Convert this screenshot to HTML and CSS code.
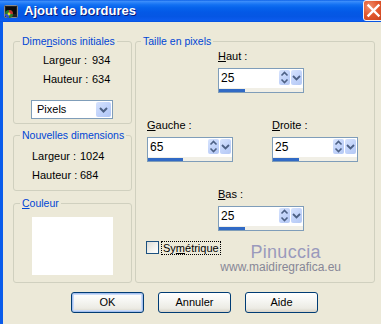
FILE: index.html
```html
<!DOCTYPE html>
<html lang="fr">
<head>
<meta charset="utf-8">
<title>Ajout de bordures</title>
<link rel="stylesheet" href="styles.css">
</head>
<body>
<div class="window">
  <div class="titlebar">
    <svg class="app-icon" viewBox="0 0 16 16" width="16" height="16">
      <rect x="1.5" y="1.5" width="13" height="12" rx="1" fill="#202020" stroke="#8a8a8a"/>
      <rect x="3" y="3" width="10" height="7" fill="#0a0a0a"/>
      <circle cx="6" cy="10" r="4" fill="#2a7a2a"/>
      <path d="M6 6a4 4 0 0 1 4 4H6z" fill="#c03030"/>
      <path d="M2 10a4 4 0 0 0 4 4v-4z" fill="#3050d0"/>
      <circle cx="6" cy="10" r="1.4" fill="#e0e040"/>
    </svg>
    <span class="title">Ajout de bordures</span>
    <div class="close">
      <svg viewBox="0 0 21 21" width="21" height="21">
        <path d="M5.5 5.5L15.5 15.5M15.5 5.5L5.5 15.5" stroke="#fff" stroke-width="2.4" stroke-linecap="square"/>
      </svg>
    </div>
  </div>
  <div class="client">
    <div class="main">
      <div class="leftcol">
        <div class="group g-init">
          <div class="legend">Dime<u>n</u>sions initiales</div>
          <div class="info info-init">
            <span>Largeur :</span><span>934</span>
            <span>Hauteur :</span><span>634</span>
          </div>
          <div class="select">
            <span class="select-text">Pixels</span>
            <span class="dd-btn">
              <svg viewBox="0 0 15 15" width="15" height="15"><path d="M4 6l3.5 3.5L11 6" fill="none" stroke="#4d6185" stroke-width="2"/></svg>
            </span>
          </div>
        </div>
        <div class="group g-new">
          <div class="legend">Nouvelles dimensions</div>
          <div class="info info-new">
            <span>Largeur :</span><span>1024</span>
            <span>Hauteur :</span><span>684</span>
          </div>
        </div>
        <div class="group g-color">
          <div class="legend"><u>C</u>ouleur</div>
          <div class="color-box"></div>
        </div>
      </div>
      <div class="group g-size">
        <div class="legend">Taille en pixels</div>
        <div class="field-row row-center">
          <div class="field">
            <div class="flabel"><u>H</u>aut :</div>
            <div class="spin">
              <div class="spin-top">
                <span class="spin-val">25</span>
                <span class="sbtn updown">
                  <svg viewBox="0 0 11 15" width="11" height="15"><path d="M2.5 5.5L5.5 2.5L8.5 5.5M2.5 9.5L5.5 12.5L8.5 9.5" fill="none" stroke="#4d6185" stroke-width="1.6"/></svg>
                </span>
                <span class="sbtn">
                  <svg viewBox="0 0 11 15" width="11" height="15"><path d="M2 6l3.5 3.5L9 6" fill="none" stroke="#4d6185" stroke-width="1.8"/></svg>
                </span>
              </div>
              <div class="spin-bar"><div class="bar" style="width:26px"></div></div>
            </div>
          </div>
        </div>
        <div class="field-row row-sides">
          <div class="field">
            <div class="flabel"><u>G</u>auche :</div>
            <div class="spin">
              <div class="spin-top">
                <span class="spin-val">65</span>
                <span class="sbtn updown">
                  <svg viewBox="0 0 11 15" width="11" height="15"><path d="M2.5 5.5L5.5 2.5L8.5 5.5M2.5 9.5L5.5 12.5L8.5 9.5" fill="none" stroke="#4d6185" stroke-width="1.6"/></svg>
                </span>
                <span class="sbtn">
                  <svg viewBox="0 0 11 15" width="11" height="15"><path d="M2 6l3.5 3.5L9 6" fill="none" stroke="#4d6185" stroke-width="1.8"/></svg>
                </span>
              </div>
              <div class="spin-bar"><div class="bar" style="width:35px"></div></div>
            </div>
          </div>
          <div class="field">
            <div class="flabel"><u>D</u>roite :</div>
            <div class="spin">
              <div class="spin-top">
                <span class="spin-val">25</span>
                <span class="sbtn updown">
                  <svg viewBox="0 0 11 15" width="11" height="15"><path d="M2.5 5.5L5.5 2.5L8.5 5.5M2.5 9.5L5.5 12.5L8.5 9.5" fill="none" stroke="#4d6185" stroke-width="1.6"/></svg>
                </span>
                <span class="sbtn">
                  <svg viewBox="0 0 11 15" width="11" height="15"><path d="M2 6l3.5 3.5L9 6" fill="none" stroke="#4d6185" stroke-width="1.8"/></svg>
                </span>
              </div>
              <div class="spin-bar"><div class="bar" style="width:26px"></div></div>
            </div>
          </div>
        </div>
        <div class="field-row row-center">
          <div class="field">
            <div class="flabel"><u>B</u>as :</div>
            <div class="spin">
              <div class="spin-top">
                <span class="spin-val">25</span>
                <span class="sbtn updown">
                  <svg viewBox="0 0 11 15" width="11" height="15"><path d="M2.5 5.5L5.5 2.5L8.5 5.5M2.5 9.5L5.5 12.5L8.5 9.5" fill="none" stroke="#4d6185" stroke-width="1.6"/></svg>
                </span>
                <span class="sbtn">
                  <svg viewBox="0 0 11 15" width="11" height="15"><path d="M2 6l3.5 3.5L9 6" fill="none" stroke="#4d6185" stroke-width="1.8"/></svg>
                </span>
              </div>
              <div class="spin-bar"><div class="bar" style="width:26px"></div></div>
            </div>
          </div>
        </div>
        <div class="check-row">
          <span class="checkbox"></span>
          <span class="cb-label">Sy<u>m</u>étrique</span>
          <div class="watermark">
            <span class="wm-name">Pinuccia</span>
            <span class="wm-url">www.maidiregrafica.eu</span>
          </div>
        </div>
      </div>
    </div>
    <div class="buttons">
      <div class="btn btn-default">OK</div>
      <div class="btn">Annuler</div>
      <div class="btn">Aide</div>
    </div>
  </div>
</div>
</body>
</html>
```
FILE: styles.css
```css
* { box-sizing: border-box; }
html, body { margin: 0; padding: 0; overflow: hidden; }
body {
  width: 381px;
  height: 324px;
  background: #ECE9D8;
  font-family: "Liberation Sans", Arial, sans-serif;
  font-size: 11px;
  color: #000;
}
u { text-decoration: underline; text-underline-offset: 1px; }

.window {
  width: 384px;
  height: 324px;
  display: flex;
  flex-direction: column;
}

/* Title bar */
.titlebar {
  height: 22px;
  flex: none;
  display: flex;
  align-items: center;
  padding-left: 3px;
  background: linear-gradient(to bottom,
    #0A5FE6 0%, #3D8EFA 6%, #2A82F8 12%, #1270F2 22%, #0663EC 35%,
    #0459E6 55%, #0556E4 75%, #0A5AEA 88%, #0B5CF0 95%, #0650D8 100%);
}
.app-icon { flex: none; width: 16px; height: 16px; margin-top: 1px; }
.title {
  margin-left: 5px;
  color: #fff;
  font-weight: bold;
  font-size: 13px;
  line-height: 22px;
  text-shadow: 1px 1px 0 #0A1A7A;
}
.close {
  margin-left: auto;
  align-self: flex-start;
  width: 21px;
  height: 21px;
  border: 1px solid #F4F4F4;
  border-radius: 3px;
  background: radial-gradient(circle at 30% 30%, #F09070 0%, #E2582E 45%, #C8401C 100%);
  display: flex;
}
.close svg { margin: -1px; }

/* Client area */
.client {
  flex: 1;
  background: #ECE9D8;
  border-left: 3px solid #0A5CEB;
  padding: 19px 0 0 10px;
  display: flex;
  flex-direction: column;
}
.main { display: flex; gap: 3px; }
.leftcol { width: 119px; display: flex; flex-direction: column; }

.group {
  border: 1px solid #D0D0BF;
  border-radius: 3px;
  display: flex;
  flex-direction: column;
  align-items: flex-start;
}
.legend {
  margin-top: -7px;
  margin-left: 6px;
  padding: 0 2px;
  background: #ECE9D8;
  color: #0046D5;
  font-size: 10.5px;
  line-height: 13px;
  white-space: nowrap;
}

.g-init { height: 83px; }
.g-new { height: 56px; margin-top: 11px; }
.g-color { height: 80px; margin-top: 12px; }

.info {
  display: grid;
  row-gap: 6px;
  line-height: 13px;
  white-space: nowrap;
}
.info-init { grid-template-columns: 49px auto; margin: 6px 0 0 29px; }
.info-new { grid-template-columns: 48px auto; margin: 8px 0 0 18px; }

.select {
  margin: 14px 0 0 17px;
  width: 82px;
  height: 19px;
  border: 1px solid #7F9DB9;
  background: #fff;
  display: flex;
  align-items: center;
  padding: 1px;
}
.select-text { flex: 1; padding-left: 4px; line-height: 15px; }
.dd-btn {
  width: 15px;
  height: 15px;
  border-radius: 2px;
  background: linear-gradient(135deg, #D6E2FD 0%, #C1D3FB 50%, #B0C6F6 100%);
  display: flex;
}

.color-box {
  margin: 7px 0 0 18px;
  width: 81px;
  height: 58px;
  background: #fff;
}

/* Right group */
.g-size { width: 240px; height: 242px; }
.g-size .legend { margin-left: 5px; }

.field-row { display: flex; }
.row-center { padding-left: 82px; margin-top: 26px; }
.g-size .legend + .row-center { margin-top: 2px; }
.row-sides { padding-left: 11px; gap: 39px; margin-top: 26px; }

.field { display: flex; flex-direction: column; }
.flabel { line-height: 13px; white-space: nowrap; }

.spin {
  margin-top: 5px;
  width: 86px;
  height: 25px;
  border: 1px solid #7F9DB9;
  background: #fff;
  display: flex;
  flex-direction: column;
}
.spin-top {
  height: 19px;
  display: flex;
  align-items: flex-start;
  padding: 1px 1px 0 0;
}
.spin-val {
  flex: 1;
  font-size: 12px;
  line-height: 17px;
  padding-left: 2px;
}
.sbtn {
  width: 11px;
  height: 15px;
  margin-left: 1px;
  border-radius: 2px;
  background: linear-gradient(135deg, #D8E4FD 0%, #C3D4FA 50%, #B4C8F4 100%);
  display: flex;
}
.spin-bar {
  height: 4px;
  background: #F1EFE6;
  display: flex;
  align-items: flex-end;
}
.bar { height: 3px; background: #316AC5; }

/* Checkbox + watermark */
.check-row {
  display: flex;
  align-items: flex-start;
  margin-top: 10px;
  padding-left: 10px;
}
.checkbox {
  flex: none;
  width: 13px;
  height: 13px;
  border: 1px solid #1C5180;
  background: linear-gradient(135deg, #DCDCD7 0%, #F4F4F0 60%, #FFFFFF 100%);
}
.cb-label {
  margin-left: 2px;
  padding: 0 1px;
  border: 1px dotted #000;
  line-height: 12px;
  white-space: nowrap;
}
.watermark {
  width: 120px;
  display: flex;
  flex-direction: column;
  align-items: center;
}
.wm-name {
  margin-top: 2px;
  padding-left: 10px;
  font-size: 18px;
  line-height: 18px;
  color: #9A9ABC;
  letter-spacing: 0.3px;
}
.wm-url {
  font-size: 12px;
  line-height: 13px;
  color: #878797;
}

/* Buttons */
.buttons {
  display: flex;
  gap: 14px;
  margin: 9px 0 0 58px;
}
.btn {
  width: 73px;
  height: 21px;
  border: 1px solid #003C74;
  border-radius: 3px;
  background: linear-gradient(to bottom, #FFFFFF 0%, #F6F6F3 40%, #ECEBE4 80%, #D8D3C8 100%);
  text-align: center;
  line-height: 19px;
}
.btn-default {
  box-shadow: inset 0 0 0 1px #A6C0EE, inset 0 0 0 2px #CADBF8;
}
```
